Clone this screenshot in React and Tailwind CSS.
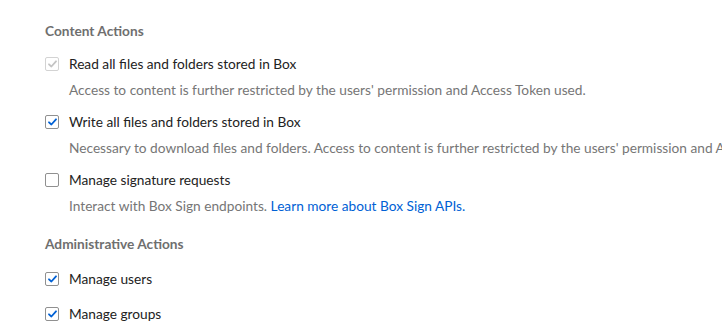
import React, { useState } from 'react';

const Checkbox = ({ checked, disabled, onChange }) => (
  <button
    type="button"
    disabled={disabled}
    onClick={onChange}
    className={`flex h-[14px] w-[14px] shrink-0 items-center justify-center rounded-[2px] border bg-white ${
      disabled ? 'border-[#d3d3d3]' : 'border-[#909090]'
    }`}
  >
    {checked && (
      <svg width="9" height="8" viewBox="0 0 9 8">
        <path
          d="M1 4.3 L3.4 6.5 L8 1.3"
          fill="none"
          stroke={disabled ? '#c4c4c4' : '#0061d5'}
          strokeWidth="1.8"
          strokeLinecap="round"
          strokeLinejoin="round"
        />
      </svg>
    )}
  </button>
);

const Option = ({ label, checked, disabled, onToggle, children, className = '' }) => (
  <div className={className}>
    <div className="flex h-5 items-center">
      <Checkbox checked={checked} disabled={disabled} onChange={onToggle} />
      <span className="ml-[10px] text-[13.7px] text-[#222222]">{label}</span>
    </div>
    {children && (
      <p className="mt-[6px] h-5 whitespace-nowrap pl-6 text-[13.7px] leading-5 text-[#767676]">
        {children}
      </p>
    )}
  </div>
);

const App = () => {
  const [scopes, setScopes] = useState({
    read: true,
    write: true,
    sign: false,
    users: true,
    groups: true
  });

  const toggle = (key) => setScopes({ ...scopes, [key]: !scopes[key] });

  return (
    <div
      className="h-[335px] w-[722px] overflow-hidden bg-white px-[45px] pt-[21px]"
      style={{ fontFamily: 'Lato, "Open Sans", sans-serif' }}
    >
      <h3 className="h-5 text-[13.7px] font-bold leading-5 text-[#6f6f6f]">Content Actions</h3>

      <Option className="mt-[13px]" label="Read all files and folders stored in Box" checked={scopes.read} disabled>
        Access to content is further restricted by the users' permission and Access Token used.
      </Option>

      <Option className="mt-3" label="Write all files and folders stored in Box" checked={scopes.write} onToggle={() => toggle('write')}>
        Necessary to download files and folders. Access to content is further restricted by the users' permission and Access Token used.
      </Option>

      <Option className="mt-3" label="Manage signature requests" checked={scopes.sign} onToggle={() => toggle('sign')}>
        Interact with Box Sign endpoints.{' '}
        <a href="#" className="text-[#0061d5]">Learn more about Box Sign APIs.</a>
      </Option>

      <h3 className="mt-[18px] h-5 text-[13.7px] font-bold leading-5 text-[#6f6f6f]">Administrative Actions</h3>

      <Option className="mt-[15px]" label="Manage users" checked={scopes.users} onToggle={() => toggle('users')} />
      <Option className="mt-[15px]" label="Manage groups" checked={scopes.groups} onToggle={() => toggle('groups')} />
    </div>
  );
};

export default App;
